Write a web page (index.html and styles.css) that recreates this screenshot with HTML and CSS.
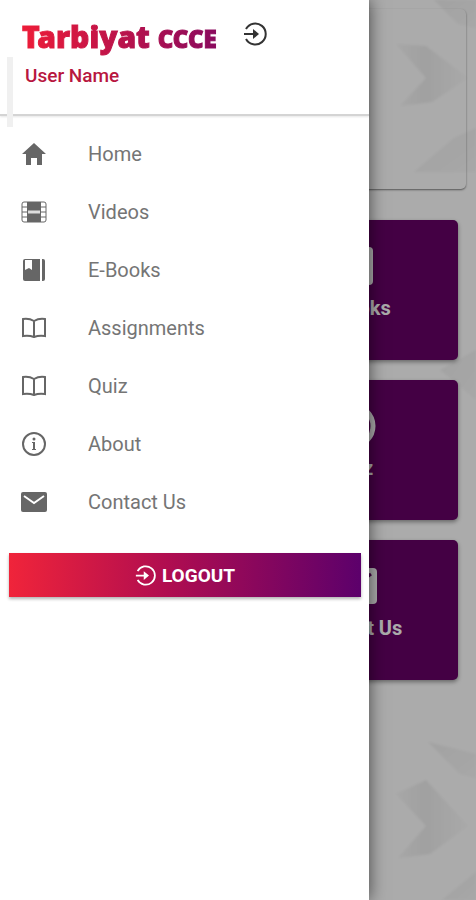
FILE: index.html
```html
<!DOCTYPE html>
<html lang="en">

<head>
    <meta charset="UTF-8">
    <meta name="viewport" content="width=device-width, initial-scale=1.0">
    <title>Tarbiyat CCCE</title>
    <link rel="stylesheet" href="styles.css">
</head>

<body>
<div class="app">
    <!-- Dashboard behind the drawer -->
    <main class="dashboard">
        <svg class="backdrop" viewBox="0 0 120 900" aria-hidden="true">
            <defs>
                <linearGradient id="fold" x1="0" y1="0" x2="1" y2="0">
                    <stop offset="0" stop-color="#000" stop-opacity="0.02"/>
                    <stop offset="0.4" stop-color="#000" stop-opacity="0.06"/>
                    <stop offset="1" stop-color="#000" stop-opacity="0.01"/>
                </linearGradient>
                <linearGradient id="corner" x1="0" y1="0" x2="1" y2="1">
                    <stop offset="0" stop-color="#000" stop-opacity="0.05"/>
                    <stop offset="1" stop-color="#000" stop-opacity="0.02"/>
                </linearGradient>
                <filter id="soft">
                    <feGaussianBlur stdDeviation="1"/>
                </filter>
            </defs>
            <g filter="url(#soft)">
                <path d="M40 44L70 78L44 106L76 102L112 78L70 46Z" fill="url(#fold)"/>
                <path d="M78 0L102 24L120 28V0Z" fill="url(#corner)"/>
                <path d="M58 172L98 138L120 128V172Z" fill="url(#corner)"/>
                <path d="M84 370L120 350V400L94 378Z" fill="url(#corner)"/>
                <path d="M72 742L104 774L120 778V754Z" fill="url(#corner)"/>
                <path d="M40 794L70 826L42 858L74 854L112 826L70 780Z" fill="url(#fold)"/>
                <path d="M86 900L120 872V900Z" fill="url(#corner)"/>
            </g>
        </svg>
        <div class="banner"></div>
        <div class="cards">
            <a class="card" href="#ebooks">
                <svg class="card-icon" viewBox="0 0 48 48" aria-hidden="true">
                    <path fill="#fff" d="M8 5h32a4 4 0 0 1 4 4v30a4 4 0 0 1-4 4H8a4 4 0 0 1-4-4V9a4 4 0 0 1 4-4z"/>
                </svg>
                <span>E-Books</span>
            </a>
            <a class="card" href="#quiz">
                <svg class="card-icon" viewBox="0 0 48 48" aria-hidden="true">
                    <circle cx="24" cy="24" r="20" fill="none" stroke="#fff" stroke-width="5"/>
                </svg>
                <span>Quiz</span>
            </a>
            <a class="card" href="#contact">
                <svg class="card-icon" viewBox="0 0 48 48" aria-hidden="true">
                    <rect x="0" y="6" width="48" height="36" rx="4" fill="#fff"/>
                    <path d="M5 12l19 14 18-14" fill="none" stroke="#606" stroke-width="3"/>
                </svg>
                <span>Contact Us</span>
            </a>
        </div>
        <div class="scrim"></div>
    </main>

    <!-- Side drawer -->
    <aside class="drawer">
        <header class="drawer-header">
            <div class="brand-row">
                <h1 class="brand">Tarbiyat <span class="brand-small">CCCE</span></h1>
                <button class="icon-button" type="button" aria-label="Log out">
                    <svg viewBox="0 0 24 24" aria-hidden="true">
                        <path class="line" d="M3 7a10.500 10.500 0 1 1 0 10M1 12h13"/>
                        <path class="solid" d="M10 7l6 5-6 5z"/>
                    </svg>
                </button>
            </div>
            <p class="user-name">User Name</p>
        </header>

        <nav class="menu">
            <a class="menu-item" href="#home">
                <svg viewBox="0 0 28 28" aria-hidden="true">
                    <path class="solid" d="M14 3L2 14h4v11h5v-7h6v7h5V14h4z"/>
                </svg>
                Home
            </a>
            <a class="menu-item" href="#videos">
                <svg viewBox="0 0 28 28" aria-hidden="true">
                    <rect class="thin" x="2" y="4" width="24" height="20" rx="2"/>
                    <path class="solid" d="M7 4h14v20H7z"/>
                    <path class="thin" d="M2 9h5M2 14h5M2 19h5M21 9h5M21 14h5M21 19h5"/>
                    <path d="M8 14h12" stroke="#ddd" stroke-width="3"/>
                </svg>
                Videos
            </a>
            <a class="menu-item" href="#ebooks">
                <svg viewBox="0 0 28 28" aria-hidden="true">
                    <path class="solid" d="M5 3h15v22H5a2 2 0 0 1-2-2V5a2 2 0 0 1 2-2z"/>
                    <path class="solid" d="M22 3h1a2 2 0 0 1 2 2v18a2 2 0 0 1-2 2h-1z"/>
                    <path fill="#fff" d="M5 4h7v10l-3-2-4 2z"/>
                </svg>
                E-Books
            </a>
            <a class="menu-item" href="#assignments">
                <svg viewBox="0 0 28 28" aria-hidden="true">
                    <path class="line" d="M14 7Q9 4 3 5v17q6-1 11 1 5-2 11-1V5q-6-1-11 2zv16"/>
                </svg>
                Assignments
            </a>
            <a class="menu-item" href="#quiz">
                <svg viewBox="0 0 28 28" aria-hidden="true">
                    <path class="line" d="M14 7Q9 4 3 5v17q6-1 11 1 5-2 11-1V5q-6-1-11 2zv16"/>
                </svg>
                Quiz
            </a>
            <a class="menu-item" href="#about">
                <svg viewBox="0 0 28 28" aria-hidden="true">
                    <circle class="line" cx="14" cy="14" r="11"/>
                    <path class="solid" d="M12 12h3v7h1v1h-4v-1h1v-6h-1z"/>
                    <circle class="solid" cx="14" cy="9" r="1.500"/>
                </svg>
                About
            </a>
            <a class="menu-item" href="#contact">
                <svg viewBox="0 0 28 28" aria-hidden="true">
                    <rect class="solid" x="1" y="4" width="26" height="20" rx="2"/>
                    <path d="M4 8l10 7 10-7" fill="none" stroke="#fff" stroke-width="2"/>
                </svg>
                Contact Us
            </a>
        </nav>

        <button class="logout" type="button">
            <svg viewBox="0 0 24 24" aria-hidden="true">
                <path class="line" d="M3 7a10.500 10.500 0 1 1 0 10M1 12h13"/>
                <path class="solid" d="M10 7l6 5-6 5z"/>
            </svg>
            LOGOUT
        </button>
    </aside>
</div>
</body>

</html>
```
FILE: styles.css
```css
* {
    box-sizing: border-box;
}

body {
    margin: 0;
    font-family: Roboto, "Liberation Sans", sans-serif;
    background-color: #fff;
}

.app {
    position: relative;
    min-height: 100vh;
    overflow: hidden;
}

/* Dashboard */
.dashboard {
    min-height: 100vh;
    padding: 9px 10px;
}

.backdrop {
    position: absolute;
    top: 0;
    right: 0;
    width: 120px;
    height: 900px;
}

.banner {
    height: 180px;
    border-radius: 5px;
    box-shadow: 0 1px 2px rgba(0, 0, 0, 0.5);
}

.cards {
    display: grid;
    grid-template-columns: 1fr 1fr;
    gap: 20px;
    padding: 31px 8px;
}

.card {
    position: relative;
    grid-column: 2;
    display: flex;
    flex-direction: column;
    align-items: center;
    height: 140px;
    padding-top: 22px;
    border-radius: 5px;
    background-color: #660066;
    box-shadow: 0 2px 4px rgba(0, 0, 0, 0.4);
    color: #fff;
    font-size: 20px;
    font-weight: 700;
    line-height: 36px;
    text-decoration: none;
}

.card-icon {
    width: 48px;
    height: 48px;
}

.scrim {
    position: absolute;
    inset: 0;
    background-color: rgba(0, 0, 0, 0.33);
}

/* Drawer */
.drawer {
    position: absolute;
    top: 0;
    bottom: 0;
    left: 0;
    width: calc(100% - 107px);
    background-color: #fff;
    box-shadow: 0 0 16px rgba(0, 0, 0, 0.6);
}

.drawer-header {
    position: relative;
    height: 116px;
    padding: 18px 22px;
    border-bottom: 2px solid #d4d4d4;
    box-shadow: 0 1px 2px rgba(0, 0, 0, 0.1);
}

.drawer-header::before {
    content: "";
    position: absolute;
    top: 57px;
    left: 7px;
    width: 6px;
    height: 70px;
    background-color: #f0f0f0;
}

.brand-row {
    display: flex;
    align-items: flex-start;
    gap: 26px;
}

.brand {
    margin: 0;
    font-family: "Noto Sans", sans-serif;
    font-size: 30px;
    font-weight: 900;
    line-height: 38px;
    background-image: linear-gradient(90deg, #ed1c38, #8a0a5e);
    background-clip: text;
    -webkit-background-clip: text;
    -webkit-text-stroke: 1px transparent;
    color: transparent;
    white-space: nowrap;
}

.brand-small {
    font-size: 24px;
}

.icon-button {
    width: 24px;
    height: 32px;
    padding: 0;
    border: 0;
    background: none;
    color: #333;
}

.icon-button svg {
    display: block;
    width: 24px;
    height: 24px;
}

.user-name {
    margin: 6px 3px;
    color: #b8163f;
    font-size: 19px;
    font-weight: 500;
    line-height: 24px;
}

.line {
    fill: none;
    stroke: currentColor;
    stroke-width: 2;
}

.thin {
    fill: none;
    stroke: currentColor;
    stroke-width: 1;
}

.solid {
    fill: currentColor;
}

.menu {
    padding-top: 9px;
}

.menu-item {
    display: flex;
    align-items: center;
    gap: 40px;
    height: 58px;
    padding-left: 20px;
    color: #757575;
    font-size: 20px;
    text-decoration: none;
}

.menu-item svg {
    width: 28px;
    height: 28px;
    color: #666;
}

.logout {
    display: flex;
    align-items: center;
    justify-content: center;
    gap: 6px;
    width: calc(100% - 17px);
    height: 44px;
    margin: 22px 8px 0 9px;
    border: 0;
    background-image: linear-gradient(90deg, #f0243a, #b00d50 45%, #5c006b);
    box-shadow: 0 2px 3px rgba(0, 0, 0, 0.3);
    color: #fff;
    font-family: inherit;
    font-size: 19px;
    font-weight: 700;
}

.logout svg {
    width: 21px;
    height: 21px;
}
```
